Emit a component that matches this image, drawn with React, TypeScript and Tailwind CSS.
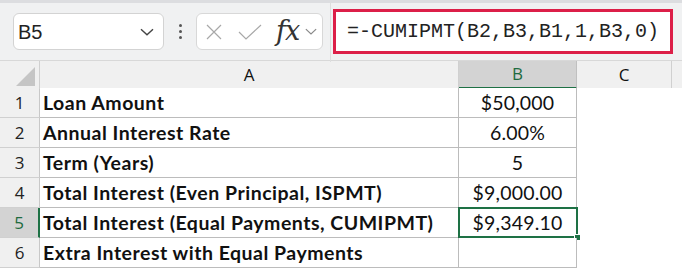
import React from 'react';

// Sheet data
const ROWS = [
  { label: 'Loan Amount', value: '$50,000' },
  { label: 'Annual Interest Rate', value: '6.00%' },
  { label: 'Term (Years)', value: '5' },
  { label: 'Total Interest (Even Principal, ISPMT)', value: '$9,000.00' },
  { label: 'Total Interest (Equal Payments, CUMIPMT)', value: '$9,349.10' },
  { label: 'Extra Interest with Equal Payments', value: '' },
];

const SELECTED_ROW = 5;

function Chevron({ className }: { className?: string }) {
  return (
    <svg viewBox="0 0 14 8" className={className} fill="none" stroke="currentColor" strokeWidth="1.4">
      <path d="M1 1.2 L7 6.8 L13 1.2" />
    </svg>
  );
}

function Toolbar() {
  return (
    <div className="h-[60px] bg-[#f0f1f2] border-t-[3px] border-[#dcdde0] flex items-center pl-[13px]">
      {/* Name box */}
      <div className="w-[151px] h-[37px] bg-white border border-[#d3d3d3] rounded-[6px] flex items-center justify-between pl-[4px] pr-[9px]">
        <span className="text-[20px] text-[#222] font-['Liberation_Sans',sans-serif]">B5</span>
        <Chevron className="w-[14px] h-[8px] text-[#444]" />
      </div>

      {/* dots */}
      <div className="w-[32px] flex flex-col items-center gap-[3px]">
        <span className="w-[3px] h-[3px] bg-[#555] rounded-full" />
        <span className="w-[3px] h-[3px] bg-[#555] rounded-full" />
        <span className="w-[3px] h-[3px] bg-[#555] rounded-full" />
      </div>

      {/* cancel / enter / fx */}
      <div className="w-[127px] h-[37px] bg-white border border-[#d8d8d8] rounded-[6px] flex items-center pl-[9px]">
        <svg viewBox="0 0 16 16" className="w-[16px] h-[16px] text-[#a8a8a8]" fill="none" stroke="currentColor" strokeWidth="1.2">
          <path d="M1 1 L15 15 M15 1 L1 15" />
        </svg>
        <svg viewBox="0 0 24 16" className="w-[24px] h-[16px] ml-[16px] text-[#a8a8a8]" fill="none" stroke="currentColor" strokeWidth="1.2">
          <path d="M1 8 L8 15 L23 1" />
        </svg>
        <span className="ml-[14px] text-[27px] italic text-[#333] font-['DejaVu_Serif',serif] leading-none -mt-[3px] tracking-[-1px]">
          fx
        </span>
        <Chevron className="ml-[6px] w-[12px] h-[7px] text-[#888]" />
      </div>

      <div className="ml-[7px] w-px h-[60px] bg-[#dedede]" />

      {/* formula bar */}
      <div className="ml-[2px] w-[340px] h-[45px] bg-white border-[3px] border-[#dc1f48] flex items-center pl-[11px]">
        <span className="text-[20px] text-[#222] font-['Liberation_Mono',monospace] whitespace-nowrap">=-CUMIPMT(B2,B3,B1,1,B3,0)</span>
      </div>
    </div>
  );
}

function Sheet() {
  const cols = 'grid grid-cols-[40px_419px_118px_95px_1fr]';
  return (
    <div className="font-['Lato',sans-serif] text-[#111]">
      {/* column headers */}
      <div className={`${cols} h-[28px] bg-[#f0f0f0] border-t border-[#d8d8d8] text-[17px] font-['Open_Sans',sans-serif]`}>
        <div className="relative border-r border-[#d0d0d0]">
          <div className="absolute left-[16px] bottom-[3px] w-0 h-0 border-l-[19px] border-l-transparent border-b-[19px] border-b-[#c5c5c5]" />
        </div>
        <div className="flex items-center justify-center border-r border-[#d0d0d0] border-b border-b-[#d0d0d0]">A</div>
        <div className="flex items-center justify-center bg-[#d3d3d3] text-[#1e6b3f] border-r border-[#c0c0c0] border-b-2 border-b-[#1e7145]">B</div>
        <div className="flex items-center justify-center border-r border-[#d0d0d0] border-b border-b-[#d0d0d0]">C</div>
        <div className="border-b border-[#d0d0d0]" />
      </div>

      {ROWS.map((row, i) => {
        const n = i + 1;
        const sel = n === SELECTED_ROW;
        return (
          <div key={n} className={`${cols} h-[30px]`}>
            <div
              className={`flex items-center justify-center text-[17px] font-['Open_Sans',sans-serif] border-b border-[#d0d0d0] ${
                sel ? 'bg-[#d3d3d3] text-[#1e6b3f] border-r-2 border-r-[#1e7145]' : 'bg-[#f0f0f0] text-[#222] border-r border-r-[#c8c8c8]'
              }`}
            >
              {n}
            </div>
            <div className="flex items-center pl-[3px] text-[19.5px] tracking-[0.5px] font-bold border-b border-r border-[#bcbcbc] bg-white whitespace-nowrap">
              {row.label}
            </div>
            <div className="relative flex items-center justify-center text-[19.5px] tracking-[0.2px] border-b border-r border-[#bcbcbc] bg-white">
              {row.value}
              {sel && (
                <>
                  <div className="absolute -left-px -top-px -right-[2px] -bottom-px border-2 border-[#1e7145]" />
                  <div className="absolute -right-[5px] -bottom-[4px] w-[7px] h-[7px] bg-[#1e7145] border border-white" />
                </>
              )}
            </div>
            <div className="bg-white" />
            <div className="bg-white" />
          </div>
        );
      })}
    </div>
  );
}

export default function App() {
  return (
    <div className="w-[682px] h-[269px] overflow-hidden bg-white">
      <Toolbar />
      <Sheet />
    </div>
  );
}
